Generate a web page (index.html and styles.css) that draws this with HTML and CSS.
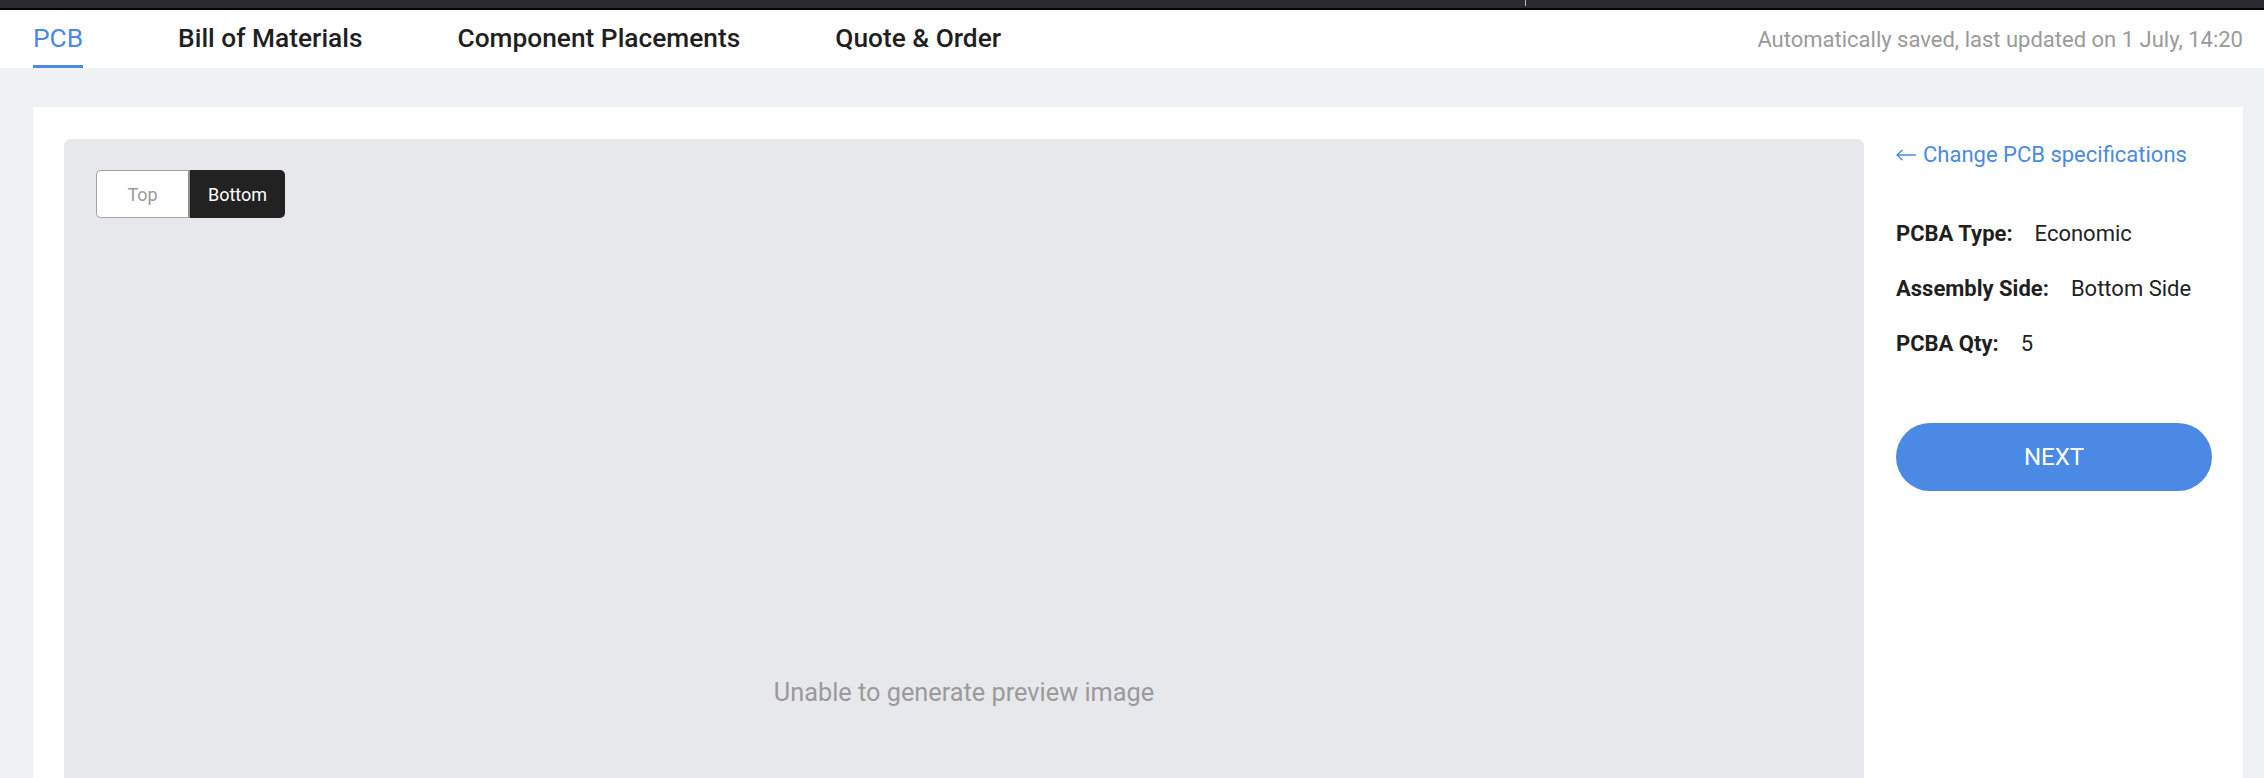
FILE: index.html
```html
<!DOCTYPE html>
<html lang="en">
<head>
<meta charset="utf-8">
<title>PCB</title>
<link rel="stylesheet" href="styles.css">
</head>
<body>
<div class="topbar"><span class="tick"></span></div>
<header class="header">
  <nav class="tabs">
    <a class="tab active">PCB</a>
    <a class="tab">Bill of Materials</a>
    <a class="tab">Component Placements</a>
    <a class="tab">Quote &amp; Order</a>
  </nav>
  <div class="saved">Automatically saved, last updated on 1 July, 14:20</div>
</header>
<main class="main">
  <section class="card">
    <div class="preview">
      <div class="toggle">
        <button class="seg seg-top">Top</button>
        <button class="seg seg-bottom">Bottom</button>
      </div>
      <div class="message">Unable to generate preview image</div>
    </div>
    <aside class="panel">
      <a class="back">
        <svg class="arrow" width="20" height="12" viewBox="0 0 20 12" fill="none" stroke="currentColor" stroke-width="1.4" stroke-linecap="round" stroke-linejoin="round"><path d="M1 6H19.5M1 6L6 1.2M1 6L6 10.8"/></svg>
        <span>Change PCB specifications</span>
      </a>
      <dl class="specs">
        <div class="row"><dt>PCBA Type:</dt><dd>Economic</dd></div>
        <div class="row"><dt>Assembly Side:</dt><dd>Bottom Side</dd></div>
        <div class="row"><dt>PCBA Qty:</dt><dd>5</dd></div>
      </dl>
      <button class="next">NEXT</button>
    </aside>
  </section>
</main>
</body>
</html>
```
FILE: styles.css
```css
* { box-sizing: border-box; }

html, body {
  margin: 0;
  padding: 0;
}

body {
  background: #f0f1f5;
  font-family: Roboto, "Liberation Sans", sans-serif;
  color: #222;
  overflow: hidden;
}

.topbar {
  height: 10px;
  background: #2a2a33;
  border-bottom: 2px solid #050505;
  display: flex;
}

.tick {
  width: 1px;
  height: 6px;
  margin-left: 1525px;
  background: #b9b9be;
}

.header {
  height: 58px;
  background: #fff;
  display: flex;
  justify-content: space-between;
  padding: 0 21px 0 33px;
}

.tabs {
  display: flex;
  gap: 95px;
}

.tab {
  display: flex;
  align-items: center;
  font-size: 26.3px;
  font-weight: 500;
  color: #1f1f1f;
  border-bottom: 3px solid transparent;
  cursor: pointer;
}

.tab.active {
  color: #4a8ae5;
  font-weight: 400;
  border-bottom-color: #4a8ae5;
}

.saved {
  align-self: center;
  font-size: 22px;
  color: #9a9a9a;
}

.main {
  padding: 39px 21px 0 33px;
}

.card {
  background: #fff;
  display: flex;
  gap: 32px;
  padding: 32px 31px 0 31px;
}

.preview {
  flex: 1;
  height: 1106px;
  background: #e7e8ec;
  border-radius: 7px;
  display: grid;
  padding: 31px 32px;
}

.toggle {
  grid-area: 1 / 1;
  align-self: start;
  justify-self: start;
  display: flex;
  height: 48px;
}

.seg {
  font-family: Roboto, "Liberation Sans", sans-serif;
  font-size: 18px;
  height: 48px;
  margin: 0;
  padding: 0;
  cursor: pointer;
}

.seg-top {
  width: 94px;
  background: #fff;
  color: #9b9b9b;
  border: 1px solid #a3a3a3;
  border-right: 2px solid #8f8f8f;
  border-radius: 5px 0 0 5px;
}

.seg-bottom {
  width: 95px;
  background: #222;
  color: #fff;
  border: none;
  border-radius: 0 5px 5px 0;
}

.message {
  grid-area: 1 / 1;
  place-self: center;
  font-size: 25.3px;
  color: #9a9a9a;
}

.panel {
  width: 316px;
  flex: none;
  display: flex;
  flex-direction: column;
}

.back {
  display: flex;
  align-items: center;
  gap: 7px;
  color: #4a8ae5;
  font-size: 22px;
  line-height: 30px;
  margin-top: 1px;
  cursor: pointer;
}

.arrow {
  display: block;
}

.specs {
  margin: 49px 0 0 0;
  display: flex;
  flex-direction: column;
  gap: 25px;
}

.row {
  display: flex;
  gap: 22px;
  font-size: 22px;
  line-height: 30px;
}

.row dt {
  font-weight: 700;
  color: #1f1f1f;
}

.row dd {
  margin: 0;
  color: #222;
}

.next {
  margin-top: 64px;
  height: 68px;
  width: 100%;
  border: none;
  border-radius: 34px;
  background: #4a8ae5;
  color: #fff;
  font-family: Roboto, "Liberation Sans", sans-serif;
  font-size: 24px;
  cursor: pointer;
}
```
